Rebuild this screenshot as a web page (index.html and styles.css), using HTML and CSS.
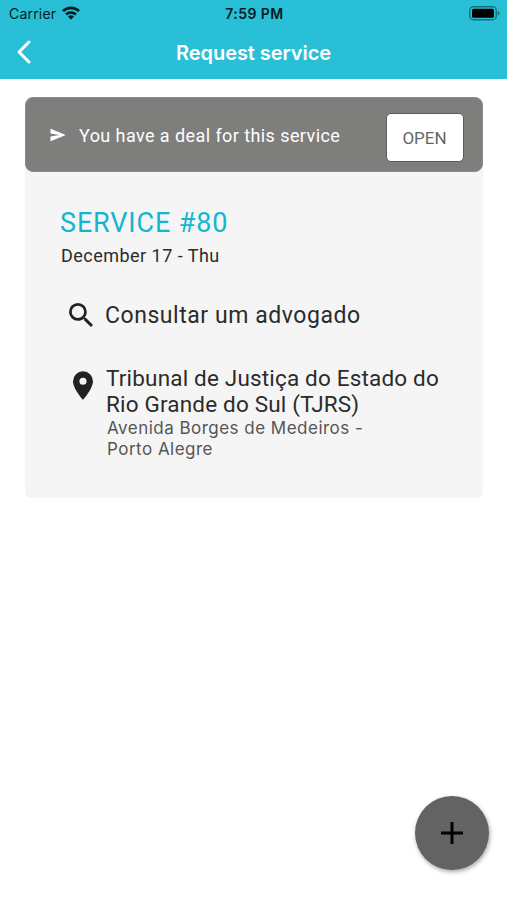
FILE: index.html
```html
<!DOCTYPE html>
<html lang="en">
<head>
<meta charset="utf-8">
<title>Request service</title>
<link rel="stylesheet" href="styles.css">
</head>
<body>
<header class="top">
  <div class="status">
    <div class="carrier"><span>Carrier</span>
      <svg class="wifi" viewBox="0 0 18 14"><g fill="none" stroke="#061c20" stroke-width="2.6"><path d="M1 5.2a11.3 11.3 0 0 1 16 0"/><path d="M4.1 8.5a6.9 6.9 0 0 1 9.8 0"/></g><path fill="#061c20" d="M6 10.6a4.2 4.2 0 0 1 6 0L9 13.8z"/></svg>
    </div>
    <div class="time">7:59 PM</div>
    <svg class="battery" viewBox="0 0 31 15"><rect x=".7" y=".7" width="26.6" height="13" rx="3.8" fill="none" stroke="#14727f" stroke-width="1.4"/><rect x="3" y="2.8" width="22" height="9" rx="1.6"/><path d="M28.8 5v4.6q1.8-.6 1.8-2.3T28.8 5z" fill="#14727f"/></svg>
  </div>
  <nav class="nav">
    <svg class="back" viewBox="0 0 16 26"><path d="M13 3 3 13l10 10" fill="none" stroke="#fff" stroke-width="3" stroke-linecap="round" stroke-linejoin="round"/></svg>
    <h1 class="title">Request service</h1>
  </nav>
</header>
<main class="card">
  <div class="deal">
    <svg class="send" viewBox="0 0 16 14"><path fill="#fff" d="M.5.8 15.8 7 .5 13.2V8.6L9.5 7 .5 5.4z"/></svg>
    <p class="deal-text">You have a deal for this service</p>
    <button class="open">OPEN</button>
  </div>
  <section class="details">
    <h2 class="service">SERVICE #80</h2>
    <p class="date">December 17 - Thu</p>
    <div class="row">
      <svg class="search" viewBox="3 3 17.5 17.5"><path fill="#222" d="M15.5 14h-.79l-.28-.27A6.47 6.47 0 0 0 16 9.5 6.5 6.5 0 1 0 9.5 16c1.61 0 3.09-.59 4.23-1.57l.27.28v.79l5 4.99L20.49 19zM9.5 14a4.5 4.5 0 1 1 0-9 4.5 4.5 0 0 1 0 9z"/></svg>
      <p class="subject">Consultar um advogado</p>
    </div>
    <div class="row place">
      <svg class="pin" viewBox="5 2 14 20"><path fill="#222" d="M12 2a7 7 0 0 0-7 7c0 5.25 7 13 7 13s7-7.75 7-13a7 7 0 0 0-7-7zm0 9.5a2.5 2.5 0 1 1 0-5 2.5 2.5 0 0 1 0 5z"/></svg>
      <div>
        <p class="court">Tribunal de Justiça do Estado do<br>Rio Grande do Sul (TJRS)</p>
        <p class="address">Avenida Borges de Medeiros -<br>Porto Alegre</p>
      </div>
    </div>
  </section>
</main>
<button class="fab" aria-label="Add"><svg viewBox="0 0 22 22"><path d="M11 0v22M0 11h22" stroke="#000" stroke-width="3"/></svg></button>
</body>
</html>
```
FILE: styles.css
```css
* { box-sizing: border-box; }
body { margin: 0; height: 900px; background: #fff; font-family: Roboto, sans-serif; color: #2b2b2b; overflow: hidden; }
h1, h2, p { margin: 0; font-weight: 400; white-space: nowrap; }
svg { display: block; flex: none; }
button { padding: 0; font-family: inherit; }
.top { height: 79px; background: #29bfd6; font-family: Inter, sans-serif; }
.status { height: 27px; padding: 0 7px 0 9px; display: grid; grid-template-columns: 1fr auto 1fr; align-items: center; color: #061c20; }
.carrier { display: flex; align-items: center; gap: 6px; font-size: 14px; letter-spacing: .2px; }
.wifi { width: 18px; height: 14px; margin-top: -2px; }
.time { font-size: 14px; font-weight: 600; letter-spacing: .45px; }
.battery { width: 31px; height: 15px; justify-self: end; }
.nav { height: 51px; padding: 0 16px; display: grid; grid-template-columns: 16px 1fr 16px; align-items: center; }
.back { width: 16px; height: 26px; margin-top: -1px; }
.title { text-align: center; color: #fff; font-size: 20px; font-weight: 600; letter-spacing: -.05px; }
.card { margin: 18px 24.5px 0 25px; height: 401px; background: #f5f5f5; border-radius: 6px; }
.deal { height: 75px; padding: 0 18px 0 24px; display: flex; align-items: center; background: #7e7e7d; border: 1px solid #8b8b8a; border-radius: 8px; }
.send { width: 16px; height: 14px; }
.deal-text { margin: 1px 0 0 13px; color: #fff; font-size: 18px; letter-spacing: .42px; }
.open { margin: 5px 0 0 auto; width: 78px; height: 49px; border: 1px solid #5b5b5b; border-radius: 5px; background: #fff; color: #666; font-size: 17px; line-height: 49px; }
.details { padding: 35px 35px 0; }
.service { font-size: 27px; line-height: 32px; letter-spacing: .85px; color: #14b5cf; }
.date { margin: 6px 0 0 1px; font-size: 18px; line-height: 22px; letter-spacing: .47px; }
.row { display: flex; margin-left: 9px; }
.row:first-of-type { margin-top: 34px; }
.search { width: 24px; height: 24px; margin-top: 2px; }
.subject { margin-left: 12px; font-size: 23px; line-height: 30px; letter-spacing: .55px; }
.place { margin: 34px 0 0 13px; }
.pin { width: 20px; height: 29px; margin: 6px 13px 0 0; }
.court { font-size: 22.5px; line-height: 26px; letter-spacing: .18px; }
.address { margin: 1px 0 0 1px; font-family: Inter, sans-serif; font-size: 17px; line-height: 21px; letter-spacing: .48px; color: #555; }
.fab { position: fixed; left: 415px; top: 796px; width: 74px; height: 74px; border: 0; border-radius: 50%; background: #636363; box-shadow: 1px 2px 4px rgba(0,0,0,.35); display: grid; place-items: center; }
.fab svg { width: 22px; height: 22px; }
```
